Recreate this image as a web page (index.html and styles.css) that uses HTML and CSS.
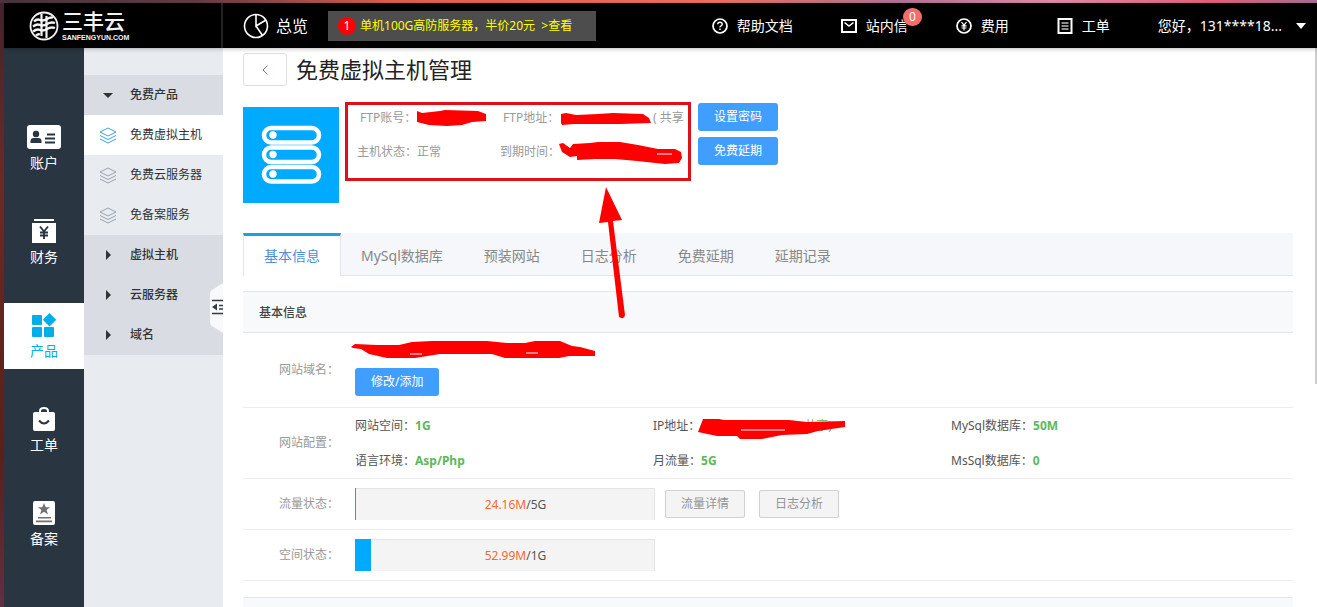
FILE: index.html
```html
<!DOCTYPE html>
<html lang="zh-CN">
<head>
<meta charset="utf-8">
<title>免费虚拟主机管理</title>
<link rel="stylesheet" href="styles.css">
</head>
<body>
<svg class="defs" aria-hidden="true">
  <symbol id="layers" viewBox="0 0 18 17"><path d="M9 1 17 5 9 9 1 5ZM1 8.500 9 12.500 17 8.500M1 12 9 16 17 12" fill="none" stroke="currentColor"/></symbol>
</svg>
<div class="window">
  <header class="topbar">
    <a class="logo" href="#" aria-label="三丰云">
      <svg width="30" height="30" viewBox="0 0 30 30" fill="none" stroke="#f4f4f4"><circle cx="15" cy="15" r="13.500" stroke-width="1.800"/><path d="M12.500 3V25M17.500 5V27" stroke-width="2.200"/><path d="M5 10.500q3-3 6-1.500t7-1 6-1M4 15.500q4-3 7-1.500t7-1 8-1M4 20.500q4-3 7-1.500t7-1 8-1M7 24.500q2-2 4-1" stroke-width="2.400"/></svg>
      <span class="logo-text"><b>三丰云</b><small>SANFENGYUN.COM</small></span>
    </a>
    <a class="overview" href="#"><svg width="26" height="26" viewBox="0 0 26 26" fill="none" stroke="#fff" stroke-width="1.600"><circle cx="13" cy="13" r="11.500"/><path d="M13 1.500V13L23 7M13 13 19.500 22.500"/></svg>总览</a>
    <a class="promo" href="#"><i>1</i><span>单机100G高防服务器，半价20元&nbsp; &gt;查看</span></a>
    <nav class="topnav">
      <a href="#"><svg width="16" height="16" viewBox="0 0 16 16" fill="none" stroke="#fff" stroke-width="1.700"><circle cx="8" cy="8" r="7"/><path d="M5.700 6.300q.2-2.100 2.300-2.100t2.300 1.900q0 1-1.200 1.700T8 9.400M8 10.500v1.600" stroke-width="1.400"/></svg>帮助文档</a>
      <a href="#"><svg width="16" height="16" viewBox="0 0 16 16" fill="none" stroke="#fff" stroke-width="2"><path d="M1 2H15V14H1Z"/><path d="M3.500 4.500 8 8 12.500 4.500" stroke-width="1.500"/></svg>站内信<em>0</em></a>
      <a href="#"><svg width="16" height="16" viewBox="0 0 16 16" fill="none" stroke="#fff" stroke-width="1.700"><circle cx="8" cy="8" r="7"/><path d="M5.500 4 8 7.200 10.500 4M8 7V12.500M5.500 7.800H10.500M5.500 10H10.500" stroke-width="1.200"/></svg>费用</a>
      <a href="#"><svg width="16" height="16" viewBox="0 0 16 16" fill="none" stroke="#fff" stroke-width="2"><path d="M1.500 1H14.500V15H1.500Z"/><path d="M4.500 5H11.500M4.500 8H11.500M4.500 11H11.500" stroke="#bbb" stroke-width="1.300"/></svg>工单</a>
      <button class="user" type="button">您好，131****18...<svg width="10" height="6" viewBox="0 0 10 6"><path d="M0 0H10L5 6Z" fill="#fff"/></svg></button>
    </nav>
  </header>
  <div class="shell">
    <nav class="rail">
      <a href="#"><svg width="34" height="24" viewBox="0 0 34 24"><rect width="34" height="24" rx="3" fill="#fff"/><g fill="#293541"><circle cx="9" cy="9" r="3.200"/><path d="M3.500 18v-2q0-3 3.500-3h4q3.500 0 3.500 3v2ZM20 8.500h8v2h-8ZM18 12.500h10v2H18ZM18 16.500h10v2H18Z"/></g></svg>账户</a>
      <a href="#"><svg width="24" height="24" viewBox="0 0 24 24"><path d="M2 0H22V2H2ZM0 4H24V24H0Z" fill="#fff"/><path d="m8 7.500 4 5 4-5M12 12v8M8 13.500h8M8 16.500h8" fill="none" stroke="#293541" stroke-width="1.900"/></svg>财务</a>
      <a class="on" href="#"><svg width="24" height="24" viewBox="0 0 24 24" fill="#00aeea"><rect y="2" width="10" height="10" rx="1"/><rect y="14" width="10" height="10" rx="1"/><rect x="12" y="14" width="10" height="10" rx="1"/><path d="m17.500 0 6.700 6.700-6.700 6.700-6.700-6.700Z"/></svg>产品</a>
      <a href="#"><svg width="22" height="24" viewBox="0 0 22 24"><rect y="5" width="22" height="19" rx="2" fill="#fff"/><path d="M7 6V4q0-3 4-3t4 3v2" fill="none" stroke="#fff" stroke-width="2"/><path d="M6 13.500q5 6 10 0" fill="none" stroke="#293541" stroke-width="2"/></svg>工单</a>
      <a href="#"><svg width="22" height="24" viewBox="0 0 22 24"><rect width="22" height="24" rx="2" fill="#fff"/><path d="m11 2 1.700 4.300H17l-3.400 2.600 1.400 4.500-4-2.700-4 2.700 1.400-4.500L5 6.300h4.300ZM5 16h13v1.600H5ZM3 19.600h16v1.600H3Z" fill="#707173"/></svg>备案</a>
    </nav>
    <nav class="submenu">
      <a class="group open" href="#"><i></i>免费产品</a>
      <a class="current" href="#"><svg width="18" height="17"><use href="#layers"/></svg>免费虚拟主机</a>
      <a href="#"><svg width="18" height="17"><use href="#layers"/></svg>免费云服务器</a>
      <a href="#"><svg width="18" height="17"><use href="#layers"/></svg>免备案服务</a>
      <a class="group" href="#"><i></i>虚拟主机</a>
      <a class="group" href="#"><i></i>云服务器</a>
      <a class="group" href="#"><i></i>域名</a>
      <button class="collapse" type="button" aria-label="收起菜单"><svg width="13" height="50" viewBox="0 0 13 50"><path d="M13 0 2 7Q0 8 0 11V39Q0 42 2 43L13 50Z" fill="#f8f9fb"/><path d="M2 17.500H13M2 30.500H13M9 22.500H13M9 26H13" stroke="#333c44" stroke-width="1.600"/><path d="M2 24 7 20.500V27.500Z" fill="#333c44"/></svg></button>
    </nav>
    <main>
      <div class="heading"><button class="back" type="button" aria-label="返回"><svg width="6" height="10" viewBox="0 0 6 10"><path d="M5.500.5 1 5 5.500 9.500" fill="none" stroke="#777"/></svg></button><h1>免费虚拟主机管理</h1></div>
      <section class="host">
        <svg class="host-icon" width="96" height="96" viewBox="0 0 96 96"><rect width="96" height="96" fill="#00aaff"/><g fill="none" stroke="#fff" stroke-width="4.500"><rect x="21" y="21" width="55" height="14.500" rx="7.200"/><rect x="21" y="40.500" width="55" height="14.500" rx="7.200"/><rect x="21" y="60" width="55" height="14.500" rx="7.200"/></g><g fill="#fff"><circle cx="30" cy="28" r="3.700"/><circle cx="30" cy="47.500" r="3.700"/><circle cx="30" cy="67" r="3.700"/></g></svg>
        <div class="facts">
          <p class="inset"><span>FTP账号：</span><span>FTP地址：</span><span>( 共享</span></p>
          <p><span>主机状态：正常</span><span>到期时间：</span></p>
        </div>
        <div class="actions"><button class="primary" type="button">设置密码</button><button class="primary" type="button">免费延期</button></div>
      </section>
      <nav class="tabs"><a class="active" href="#">基本信息</a><a href="#">MySql数据库</a><a href="#">预装网站</a><a href="#">日志分析</a><a href="#">免费延期</a><a href="#">延期记录</a></nav>
      <section class="panel">
        <h2>基本信息</h2>
        <div class="row domain"><span class="label">网站域名：</span><div class="value"><button class="primary" type="button">修改/添加</button></div></div>
        <div class="row config"><span class="label">网站配置：</span>
          <div class="value specs">
            <span>网站空间：<b>1G</b></span><span class="ip">IP地址：<b>共享)</b></span><span>MySql数据库：<b>50M</b></span>
            <span>语言环境：<b>Asp/Php</b></span><span>月流量：<b>5G</b></span><span>MsSql数据库：<b>0</b></span>
          </div>
        </div>
        <div class="row usage"><span class="label">流量状态：</span><div class="value"><div class="meter"><i style="width:0.4%"></i><span><em>24.16M</em>/5G</span></div><button class="plain" type="button">流量详情</button><button class="plain" type="button">日志分析</button></div></div>
        <div class="row usage"><span class="label">空间状态：</span><div class="value"><div class="meter"><i style="width:5.2%"></i><span><em>52.99M</em>/1G</span></div></div></div>
      </section>
      <section class="panel next"><h2>&nbsp;</h2></section>
      <div class="scroll-thumb"></div>
      <svg class="marks" width="640" height="400" viewBox="223 48 640 400" aria-hidden="true">
        <rect x="346.500" y="103.500" width="343" height="76" fill="none" stroke="#e01018" stroke-width="3"/>
        <g fill="#fe0000">
          <path d="m606 187 16 33-9 1 12 94q-1 5-6 2L608 222l-9 1Z"/>
          <path d="m417 111 5 2 18-2 5-1 33 1 8 3v7l-14 1-10 3-15 1-18-1-12-3Z"/>
          <path d="m561 114 5-1 10 2 22-1 15-1 30 1 6 4 2 5-31 1h-46l-12 1-1-2Z"/>
          <path d="m559 144 4-1 7 5 3-4 17-1 8-1 22 0 18 3 20 4 17 0 6 3 1 6-3 5-14 1-28-3-22-2-20 0-18 1v-4l-7 1-8-5Z"/>
          <path d="m351 347 4-3 22 1h22l13-3 20-1h55l20 2h18l10-2h25l12 5 8 1 15 4v5h-26l-10 2h-54l-13-4h-52l-25 4h-28l-18-4-8-5-8-1Z"/>
          <path d="m703 419 16 0 5 1h65l18 2 38-1v6l-27 4-11 3-25 1-20 4h-22l-3-3h-20l-19-4Z"/>
        </g>
        <path d="M657 154h15M410 354h12M526 353h12M741 430h44" stroke="#fff" stroke-width="1.200"/>
      </svg>
    </main>
  </div>
</div>
</body>
</html>
```
FILE: styles.css
```css
* { box-sizing: border-box; }
body { margin: 0; font: 12px/20px "Noto Sans", "Noto Sans CJK SC", sans-serif; color: #555; }
a { color: inherit; text-decoration: none; }
button { font: inherit; cursor: pointer; }
i, em { font-style: normal; }
h1, h2, p { margin: 0; font-weight: 400; }
svg { display: block; flex: none; }
.defs { position: absolute; width: 0; height: 0; }

.window {
  height: 100vh; padding: 3px 0 0 4px; display: flex; flex-direction: column; overflow: hidden;
  background: linear-gradient(90deg, #4b343f, #633d47 15%, #e0604f 30%, #ef7160 54%, #b37398 68%, #e58aac 80%, #e5607e 92%, #a87098) top / 100% 3px no-repeat,
    linear-gradient(#452330, #6c2a22 30%, #5a2018 75%, #632e44);
}
.topbar { position: relative; z-index: 1; flex: none; height: 45px; display: flex; align-items: center; background: #000; color: #fff; box-shadow: 0 1px 4px #0004; }
.logo { align-self: stretch; width: 219px; padding-left: 25px; display: flex; align-items: center; gap: 3px; border-right: 2px solid #222; }
.logo-text { display: flex; flex-direction: column; color: #f4f4f4; font-family: "Liberation Sans", "Noto Sans CJK SC", sans-serif; }
.logo-text b { font-size: 21px; font-weight: 500; line-height: 24px; }
.logo-text small { font-size: 7px; font-weight: 700; line-height: 8px; }
.overview { margin-left: 20px; display: flex; align-items: center; gap: 7px; font-size: 16px; }
.promo { margin-left: 20px; height: 30px; padding: 0 24px 0 10px; display: flex; align-items: center; gap: 4px; background: #4d4d4d; color: #ff0; white-space: nowrap; }
.promo i { width: 18px; height: 18px; line-height: 18px; border-radius: 50%; background: #f00; color: #fff; text-align: center; }
.topnav { margin-left: auto; padding-right: 11px; display: flex; align-items: center; gap: 48px; font-size: 14px; white-space: nowrap; }
.topnav a { position: relative; display: flex; align-items: center; gap: 9px; }
.topnav em { position: absolute; right: -14px; top: -8px; width: 19px; height: 18px; border-radius: 9px; background: #f56c6c; font-size: 12px; line-height: 18px; text-align: center; }
.user { padding: 0; border: 0; background: none; color: #fff; display: flex; align-items: center; gap: 14px; }

.shell { flex: 1; min-height: 0; display: flex; }
.rail { flex: none; width: 80px; padding-top: 67px; display: flex; flex-direction: column; gap: 28px; background: #293541; color: #fff; font-size: 14px; }
.rail a { height: 66px; padding-top: 10px; display: flex; flex-direction: column; align-items: center; gap: 4px; }
.rail .on { background: #fff; color: #00aeea; }
.submenu { position: relative; flex: none; width: 139px; padding-top: 27px; background: #e8ecf1; color: #333; }
.submenu a { height: 40px; padding-left: 15px; display: flex; align-items: center; gap: 13px; line-height: 22px; }
.submenu svg { color: #9aa3af; }
.submenu .group { background: #d9dde3; font-weight: 500; }
.submenu .current { background: #fff; }
.submenu .current svg { color: #3ba3db; }
.group i { width: 18px; display: flex; justify-content: center; }
.group i::before { content: ""; border: 5px solid transparent; border-left-color: #333; border-right-width: 0; }
.group.open i::before { border: 5px solid transparent; border-top-color: #333; border-bottom-width: 0; }
.collapse { position: absolute; right: 0; top: 235px; padding: 0; border: 0; background: none; }

main { position: relative; flex: 1; min-width: 0; padding: 5px 24px 0 20px; background: #fff; }
.heading { display: flex; align-items: center; gap: 9px; }
.back { width: 44px; height: 33px; padding: 0; display: grid; place-items: center; border: 1px solid #dcdfe3; border-radius: 3px; background: #fff; }
h1 { font-size: 22px; line-height: 33px; color: #222; }
.host { padding-top: 17px; display: flex; }
.host-icon { margin-top: 4px; }
.facts { width: 359px; padding-left: 18px; color: #999; }
.facts p { height: 34px; line-height: 30px; display: flex; }
.facts .inset { padding-left: 3px; }
.facts span { flex: none; width: 143px; white-space: pre; }
.facts .inset span + span { width: 150px; }
.facts .inset span:last-child { width: 36px; }
.actions { display: flex; flex-direction: column; gap: 6px; }
.primary { height: 28px; padding: 0 16px; border: 0; border-radius: 3px; background: #409eff; color: #fff; }
.tabs { margin-top: 30px; height: 43px; display: flex; background: #f5f7fa; border-bottom: 1px solid #dfe4ed; color: #888; font-size: 14px; }
.tabs a { height: 43px; padding: 3px 20px 0; line-height: 40px; white-space: nowrap; }
.tabs a + a + a { margin-left: 1px; }
.tabs .active { padding-top: 0; border: 1px solid #dfe4ed; border-top: 3px solid #17a2e8; border-bottom: 0; background: #fff; color: #4a90dc; }
.panel { margin-top: 15px; }
.panel.next { margin-top: 16px; }
h2 { height: 42px; padding-left: 16px; border: 1px solid #dfe4ed; border-width: 1px 0; background: #f7f9fb; color: #444; font-size: 12px; font-weight: 500; line-height: 42px; }
.row { display: flex; align-items: center; border-bottom: 1px solid #ebedf0; }
.label { flex: none; width: 112px; padding-left: 36px; color: #999; }
.value { flex: 1; display: flex; align-items: center; }
.domain { height: 75px; }
.domain .value { padding-top: 24px; }
.config { height: 71px; }
.specs { padding-right: 44px; display: grid; grid-template-columns: repeat(3, 1fr); line-height: 35px; }
.specs b { color: #5cb85c; }
.specs .ip b { margin-left: 104px; font-weight: 400; }
.usage { height: 51px; }
.meter { position: relative; width: 300px; height: 32px; margin-right: 10px; display: grid; place-items: center; background: #f4f4f4; border: 1px solid #e4e4e4; border-width: 1px 1px 0 0; }
.meter i { position: absolute; left: 0; top: -1px; bottom: 0; background: #00aaff; }
.meter span { padding-left: 22px; }
.meter em { color: #f56a2c; }
.plain { height: 28px; padding: 0 15px; margin-right: 14px; border: 1px solid #d0d0d2; border-radius: 2px; background: #f4f4f5; color: #909399; }
.scroll-thumb { position: absolute; right: 0; top: 0; width: 2px; height: 336px; background: #ccc; }
.marks { position: absolute; left: 0; top: 0; pointer-events: none; }
```
